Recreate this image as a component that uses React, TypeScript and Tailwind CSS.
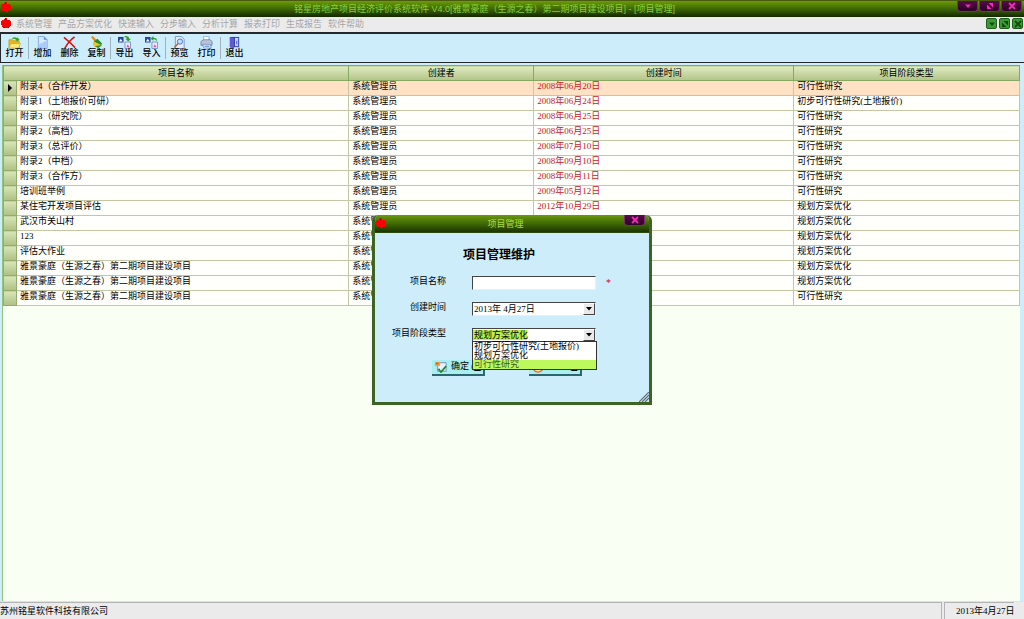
import type { ReactNode } from 'react';

interface Project {
    name: string;
    owner: string;
    date: string;
    stage: string;
}

const OWNER = '系统管理员';
const STAGES = ['初步可行性研究(土地报价)', '规划方案优化', '可行性研究'];

const PROJECTS: Project[] = [
    { name: '附录4（合作开发）', owner: OWNER, date: '2008年06月20日', stage: STAGES[2] },
    { name: '附录1（土地报价可研）', owner: OWNER, date: '2008年06月24日', stage: STAGES[0] },
    { name: '附录3（研究院）', owner: OWNER, date: '2008年06月25日', stage: STAGES[2] },
    { name: '附录2（高档）', owner: OWNER, date: '2008年06月25日', stage: STAGES[2] },
    { name: '附录3（总评价）', owner: OWNER, date: '2008年07月10日', stage: STAGES[2] },
    { name: '附录2（中档）', owner: OWNER, date: '2008年09月10日', stage: STAGES[2] },
    { name: '附录3（合作方）', owner: OWNER, date: '2008年09月11日', stage: STAGES[2] },
    { name: '培训班举例', owner: OWNER, date: '2009年05月12日', stage: STAGES[2] },
    { name: '某住宅开发项目评估', owner: OWNER, date: '2012年10月29日', stage: STAGES[1] },
    { name: '武汉市关山村', owner: OWNER, date: '', stage: STAGES[1] },
    { name: '123', owner: OWNER, date: '', stage: STAGES[1] },
    { name: '评估大作业', owner: OWNER, date: '', stage: STAGES[1] },
    { name: '雅景豪庭（生源之春）第二期项目建设项目', owner: OWNER, date: '', stage: STAGES[1] },
    { name: '雅景豪庭（生源之春）第二期项目建设项目', owner: OWNER, date: '', stage: STAGES[1] },
    { name: '雅景豪庭（生源之春）第二期项目建设项目', owner: OWNER, date: '', stage: STAGES[2] },
];

const MENUS = ['系统管理', '产品方案优化', '快速输入', '分步输入', '分析计算', '报表打印', '生成报告', '软件帮助'];

function Apple() {
    return (
        <svg viewBox="0 0 12 12" className="size-3 shrink-0" aria-hidden="true">
            <path d="M2 3h2V2h1v1h1V1h1v2h3v1h1v5h-1v1H9v1H3v-1H2V8H1V4h1z" fill="#f50505" />
            <path d="M5 1h1v2H5z" fill="#7a1200" />
            <path d="M3 10h2v1H3zM8 10h1v1H8z" fill="#a80000" />
        </svg>
    );
}

/* ---------- Toolbar icons, all on a 14x14 grid ---------- */

const ICONS: Record<string, ReactNode> = {
    open: (
        <>
            <path d="M1 4h4l1 1h6v8H1z" fill="#e8b71c" stroke="#b98708" strokeWidth=".6" />
            <path d="M3 8h10.500l-2 5H1z" fill="#ffe877" stroke="#c79a12" strokeWidth=".6" />
            <path d="M4 3c1-2 4-2.500 6-.5V1l2.500 3L9 6V4.500C7.500 3 6 3 4 3z" fill="#35a62c" />
        </>
    ),
    add: (
        <>
            <path d="M2.500.5h6l3.500 3.500v9.500H2.500z" fill="#d7e8ff" stroke="#7ea6e0" />
            <path d="M3 9l8.500-4v8H3z" fill="#a9cdf8" />
            <path d="M8.500.5V4H12z" fill="#5b8fdb" />
        </>
    ),
    remove: (
        <path d="M1 1.500c4 3 8 7 12 11M12.500 1C8 4 5 8 2 13" fill="none" stroke="#cf1616" strokeWidth="1.700" />
    ),
    copy: (
        <>
            <path d="M1 1l2-1 4 4-2 2z" fill="#e08e1e" />
            <path d="M4 6l4-3 5 5-1 2z" fill="#1f8f2c" />
            <path d="M3 7l1-1 8 4-3 3-5-2z" fill="#e9c52c" />
            <path d="M5 11l6-1 2 0-4 3z" fill="#3f8a1c" />
        </>
    ),
    exportFile: (
        <>
            <path d="M0 1h6v6H0z" fill="#24489c" />
            <path d="M1 6l2-3 2 3z" fill="#fff" />
            <path d="M7.500 6.500h6v7h-6z" fill="#e5eeff" stroke="#7b8fc7" />
            <path d="M9 12l1.500-3 2 3z" fill="#d05aa0" />
            <path d="M7 0c4 0 5 1 5 3h2l-3 3-3-3h1.500C9.500 2 9 1.500 7 1z" fill="#2f9c2f" />
        </>
    ),
    importFile: (
        <>
            <path d="M0 1h6v6H0z" fill="#24489c" />
            <path d="M1 6l2-3 2 3z" fill="#fff" />
            <path d="M7.500 6.500h6v7h-6z" fill="#e5eeff" stroke="#7b8fc7" />
            <path d="M9 12l1.500-3 2 3z" fill="#d05aa0" />
            <path d="M6 3l3-3v2c3 0 4 1 4 4-1-2-2-2.500-4-2.500V5z" fill="#2f9c2f" />
        </>
    ),
    preview: (
        <>
            <path d="M2.500.5H9l3 3v10H2.500z" fill="#e4eeff" stroke="#6f93d6" />
            <circle cx="7.500" cy="6" r="2.800" fill="#bfe0ff" stroke="#4a6fc0" />
            <path d="M5.500 8.200L1.500 12.500" stroke="#a06a50" strokeWidth="1.600" />
        </>
    ),
    print: (
        <>
            <path d="M4 0l6 1-1 5H4z" fill="#fff" stroke="#6d92c7" strokeWidth=".7" />
            <path d="M1 6l3-2h7l2 2v4H1z" fill="#b9c2d8" stroke="#5f6a88" strokeWidth=".7" />
            <path d="M3 9h8l1 4H4z" fill="#e6f0ff" stroke="#5f78b0" strokeWidth=".7" />
            <path d="M5 11h5" stroke="#3a72c8" />
        </>
    ),
    exit: (
        <>
            <path d="M2 1h10v11H2z" fill="#2d3fb4" />
            <path d="M7.500 2H11v9H7.500z" fill="#c6d5ff" />
            <path d="M2 1l4.500 1.500V14L2 12z" fill="#6157d6" />
            <path d="M9 5h1v4H9z" fill="#3c4fc4" />
        </>
    ),
};

function ToolButton({ icon, label }: { icon: string; label: string }) {
    return (
        <button type="button" className="flex w-[27px] flex-col items-center">
            <svg viewBox="0 0 14 14" className="size-[13px] shrink-0" aria-hidden="true">
                {ICONS[icon]}
            </svg>
            <span className="whitespace-nowrap text-[9px] font-medium leading-[9px]">{label}</span>
        </button>
    );
}

function ToolSeparator() {
    return <span className="my-px w-px bg-[#9fb3bd]" />;
}

function WindowGlyph({ kind }: { kind: string }) {
    return (
        <svg viewBox="0 0 8 8" className="size-2" aria-hidden="true">
            {kind === 'min' && <path d="M1 2.500h6L4 6z" fill="currentColor" />}
            {kind === 'max' && (
                <path d="M1 2.500l4.500 4.500H1zM2.500 1H7v4.500z" fill="currentColor" />
            )}
            {kind === 'close' && <path d="M1 1l6 6M7 1L1 7" stroke="currentColor" strokeWidth="1.800" />}
        </svg>
    );
}

function CaptionButton({ kind, label }: { kind: string; label: string }) {
    return (
        <button
            type="button"
            aria-label={label}
            className="flex h-[11px] w-[21px] items-center justify-center rounded-b-sm border border-t-0 border-[#7a2c6c] bg-linear-to-b from-[#5a0b4c] to-[#2c0226] text-[#f22bb8]"
        >
            <WindowGlyph kind={kind} />
        </button>
    );
}

function MdiButton({ kind, label }: { kind: string; label: string }) {
    return (
        <button
            type="button"
            aria-label={label}
            className="flex h-[11px] w-[11px] items-center justify-center rounded-[2px] border border-[#1d5c1a] bg-[#3c9a35] text-[#0f4a0c]"
        >
            <WindowGlyph kind={kind} />
        </button>
    );
}

function DropArrow() {
    return (
        <span className="flex h-full w-3 items-center justify-center border border-t-white border-l-white border-r-[#444] border-b-[#444] bg-[#e9e9e9]">
            <svg viewBox="0 0 6 4" className="h-1 w-1.5" aria-hidden="true">
                <path d="M0 0h6L3 3.500z" fill="#000" />
            </svg>
        </span>
    );
}

/* ---------- Project table ---------- */

function ProjectTable() {
    const head =
        'h-[15px] border border-[#86a862] bg-linear-to-b from-[#e0ebc2] to-[#b3c487] p-0 text-center font-normal leading-[13px]';
    const cell = 'h-[15px] whitespace-nowrap border border-[#c3c7a4] p-0 pl-[3px] align-top leading-[10px]';

    return (
        <table className="w-full table-fixed border-collapse text-[9px] text-black">
            <colgroup>
                <col className="w-[13px]" />
                <col className="w-[32.7%]" />
                <col className="w-[18.2%]" />
                <col className="w-[25.6%]" />
                <col />
            </colgroup>
            <thead>
                <tr>
                    <th colSpan={2} className={head}>项目名称</th>
                    <th className={head}>创建者</th>
                    <th className={head}>创建时间</th>
                    <th className={head}>项目阶段类型</th>
                </tr>
            </thead>
            <tbody>
                {PROJECTS.map((p, i) => (
                    <tr key={i} className={i === 0 ? 'bg-[#ffe2c3]' : 'bg-[#fffffc]'}>
                        <td className="h-[15px] border border-[#93ab6c] bg-linear-to-b from-[#d9e5b8] to-[#afbf85] p-0">
                            {i === 0 && (
                                <svg viewBox="0 0 4 8" className="mx-auto h-2 w-1" aria-hidden="true">
                                    <path d="M0 0l4 4-4 4z" fill="#000" />
                                </svg>
                            )}
                        </td>
                        <td className={cell}>{p.name}</td>
                        <td className={cell}>{p.owner}</td>
                        <td className={`${cell} text-[#c8201c]`}>{p.date}</td>
                        <td className={cell}>{p.stage}</td>
                    </tr>
                ))}
            </tbody>
        </table>
    );
}

/* ---------- Project dialog ---------- */

const FIELD =
    'block h-[14px] w-full appearance-none rounded-none border border-t-[#444] border-l-[#444] border-r-[#eee] border-b-[#eee] bg-white pl-px text-[9px] leading-3 text-black outline-none';
const LABEL = 'whitespace-nowrap text-right leading-[10px]';

function ProjectDialog() {
    return (
        <section
            role="dialog"
            aria-labelledby="dialog-caption"
            className="w-[280px] overflow-hidden rounded-t-md border-[3px] border-t-0 border-[#3d6424] bg-[#cdedfa] text-[9px]"
        >
            <header className="flex h-[18px] items-start border-b border-[#2a4a10] bg-linear-to-b from-[#6b9a0c] via-[#3f6a06] to-[#1d3502]">
                <span className="pt-[2px]">
                    <Apple />
                </span>
                <h2 id="dialog-caption" className="flex-1 text-center text-[9px] leading-[18px] text-[#a8dd3c]">
                    项目管理
                </h2>
                <span className="pr-1">
                    <CaptionButton kind="close" label="关闭" />
                </span>
            </header>

            <form className="relative pt-3.5 pb-[26px]">
                <h1 className="pr-[26px] text-center text-xs font-bold leading-4">项目管理维护</h1>

                <div className="mt-[13px] grid grid-cols-[71px_124px_1fr] gap-x-[26px] gap-y-3">
                    <label htmlFor="name" className={LABEL}>项目名称</label>
                    <input id="name" type="text" className={FIELD} />
                    <span className="-ml-4 text-[10px] leading-[14px] text-[#e00020]">*</span>

                    <label htmlFor="created" className={LABEL}>创建时间</label>
                    <div className="relative">
                        <input id="created" type="text" defaultValue="2013年 4月27日" className={FIELD} />
                        <button type="button" aria-label="选择日期" className="absolute inset-y-px right-px">
                            <DropArrow />
                        </button>
                    </div>
                    <span />

                    <label htmlFor="stage" className={LABEL}>项目阶段类型</label>
                    <div className="relative">
                        <select
                            id="stage"
                            defaultValue={STAGES[1]}
                            className={`${FIELD} bg-[linear-gradient(#b4f04f,#b4f04f)] bg-[length:54px_10px] bg-left bg-no-repeat`}
                        >
                            {STAGES.map((s) => (
                                <option key={s}>{s}</option>
                            ))}
                        </select>
                        <span className="pointer-events-none absolute inset-y-px right-px">
                            <DropArrow />
                        </span>
                        <ul
                            role="listbox"
                            aria-label="项目阶段类型"
                            className="absolute top-[13px] left-0 z-10 w-[125px] border border-[#333] bg-white leading-[9px]"
                        >
                            {STAGES.map((s, i) => (
                                <li
                                    key={s}
                                    role="option"
                                    aria-selected={i === 2}
                                    className={i === 2 ? 'bg-[#bdf85c] pl-px text-[#3f5a1c]' : 'pl-px'}
                                >
                                    {s}
                                </li>
                            ))}
                        </ul>
                    </div>
                    <span />
                </div>

                <div className="mt-[18px] flex gap-11 pl-[57px]">
                    <button
                        type="submit"
                        className="flex h-4 w-[53px] items-center gap-1 whitespace-nowrap border-r-2 border-b-2 border-[#2e6670] bg-[#a9eff0] pl-[3px]"
                    >
                        <svg viewBox="0 0 14 14" className="size-3 shrink-0" aria-hidden="true">
                            <path d="M3 2h10v10H3z" fill="#e7f0ff" stroke="#6c86bd" />
                            <path d="M0 1h6v5H0z" fill="#f2a33c" />
                            <path d="M1 2h3v2H1z" fill="#e1543a" />
                            <path d="M4 9l3 4 6-7" fill="none" stroke="#1c8a2a" strokeWidth="2" />
                        </svg>
                        <span>
                            确定 (<u>O</u>)
                        </span>
                    </button>
                    <button
                        type="button"
                        className="flex h-4 w-[53px] items-center gap-1 whitespace-nowrap border-r-2 border-b-2 border-[#2e6670] bg-[#a9eff0] pl-[3px]"
                    >
                        <svg viewBox="0 0 14 14" className="size-3 shrink-0" aria-hidden="true">
                            <circle cx="7" cy="7" r="6" fill="#ffd9b0" stroke="#d9642a" strokeWidth="1.500" />
                            <path d="M4.500 4.500l5 5M9.500 4.500l-5 5" stroke="#d43a1e" strokeWidth="1.500" />
                        </svg>
                        <span>
                            取消 (<u>C</u>)
                        </span>
                    </button>
                </div>

                <svg viewBox="0 0 10 10" className="absolute right-0 bottom-0 size-2.5" aria-hidden="true">
                    <path d="M0 10L10 0M3 10l7-7M6 10l4-4" stroke="#5d6a70" strokeWidth="1.200" />
                </svg>
            </form>
        </section>
    );
}

export default function App() {
    return (
        <div className="relative flex min-h-screen flex-col bg-[#cdedfa] font-['Liberation_Serif','Noto_Sans_CJK_SC',sans-serif] text-[9px] text-black">
            <header className="flex h-[17px] items-start border-t border-[#4a5a10] bg-linear-to-b from-[#6c9c08] via-[#3d6804] to-[#142800]">
                <Apple />
                <h1 className="flex-1 whitespace-nowrap text-center font-['Liberation_Sans','Noto_Sans_CJK_SC',sans-serif] text-[9px] leading-4 text-[#86cf3a]">
                    铭星房地产项目经济评价系统软件 V4.0[雅景豪庭（生源之春）第二期项目建设项目] - [项目管理]
                </h1>
                <div className="flex gap-px pr-[2px]">
                    <CaptionButton kind="min" label="最小化" />
                    <CaptionButton kind="max" label="还原" />
                    <CaptionButton kind="close" label="关闭" />
                </div>
            </header>

            <nav className="flex h-[15px] items-start bg-[#ebebeb] text-[#a6a6a6]">
                <Apple />
                <div className="flex flex-1 gap-1.5 pl-1">
                    {MENUS.map((m) => (
                        <button key={m} type="button" className="whitespace-nowrap leading-[14px]">
                            {m}
                        </button>
                    ))}
                </div>
                <div className="flex gap-[2px] pt-px pr-px">
                    <MdiButton kind="min" label="最小化窗口" />
                    <MdiButton kind="max" label="还原窗口" />
                    <MdiButton kind="close" label="关闭窗口" />
                </div>
            </nav>

            <div className="flex h-[31px] border-t-2 border-b border-l border-[#24282c] pt-[2px] pb-[2px]">
                <ToolButton icon="open" label="打开" />
                <ToolSeparator />
                <ToolButton icon="add" label="增加" />
                <ToolButton icon="remove" label="删除" />
                <ToolButton icon="copy" label="复制" />
                <ToolSeparator />
                <ToolButton icon="exportFile" label="导出" />
                <ToolButton icon="importFile" label="导入" />
                <ToolSeparator />
                <ToolButton icon="preview" label="预览" />
                <ToolButton icon="print" label="打印" />
                <ToolSeparator />
                <ToolButton icon="exit" label="退出" />
            </div>

            <main className="flex flex-1 pt-[2px] pr-1 pl-[2px]">
                <div className="flex-1 border-l border-[#8fc47c] bg-[#fafff4]">
                    <ProjectTable />
                </div>
            </main>

            <footer className="flex h-[18px] gap-[2px] border-t border-[#d4e6ee] bg-[#ebebeb] pr-[10px] leading-4">
                <span className="flex-1 border-t border-r border-[#b4b4b8]">苏州铭星软件科技有限公司</span>
                <span className="w-[70px] border-t border-l border-[#b4b4b8] pl-[11px] whitespace-nowrap">2013年4月27日</span>
            </footer>

            <div className="absolute inset-0 flex items-center justify-center">
                <ProjectDialog />
            </div>
        </div>
    );
}
